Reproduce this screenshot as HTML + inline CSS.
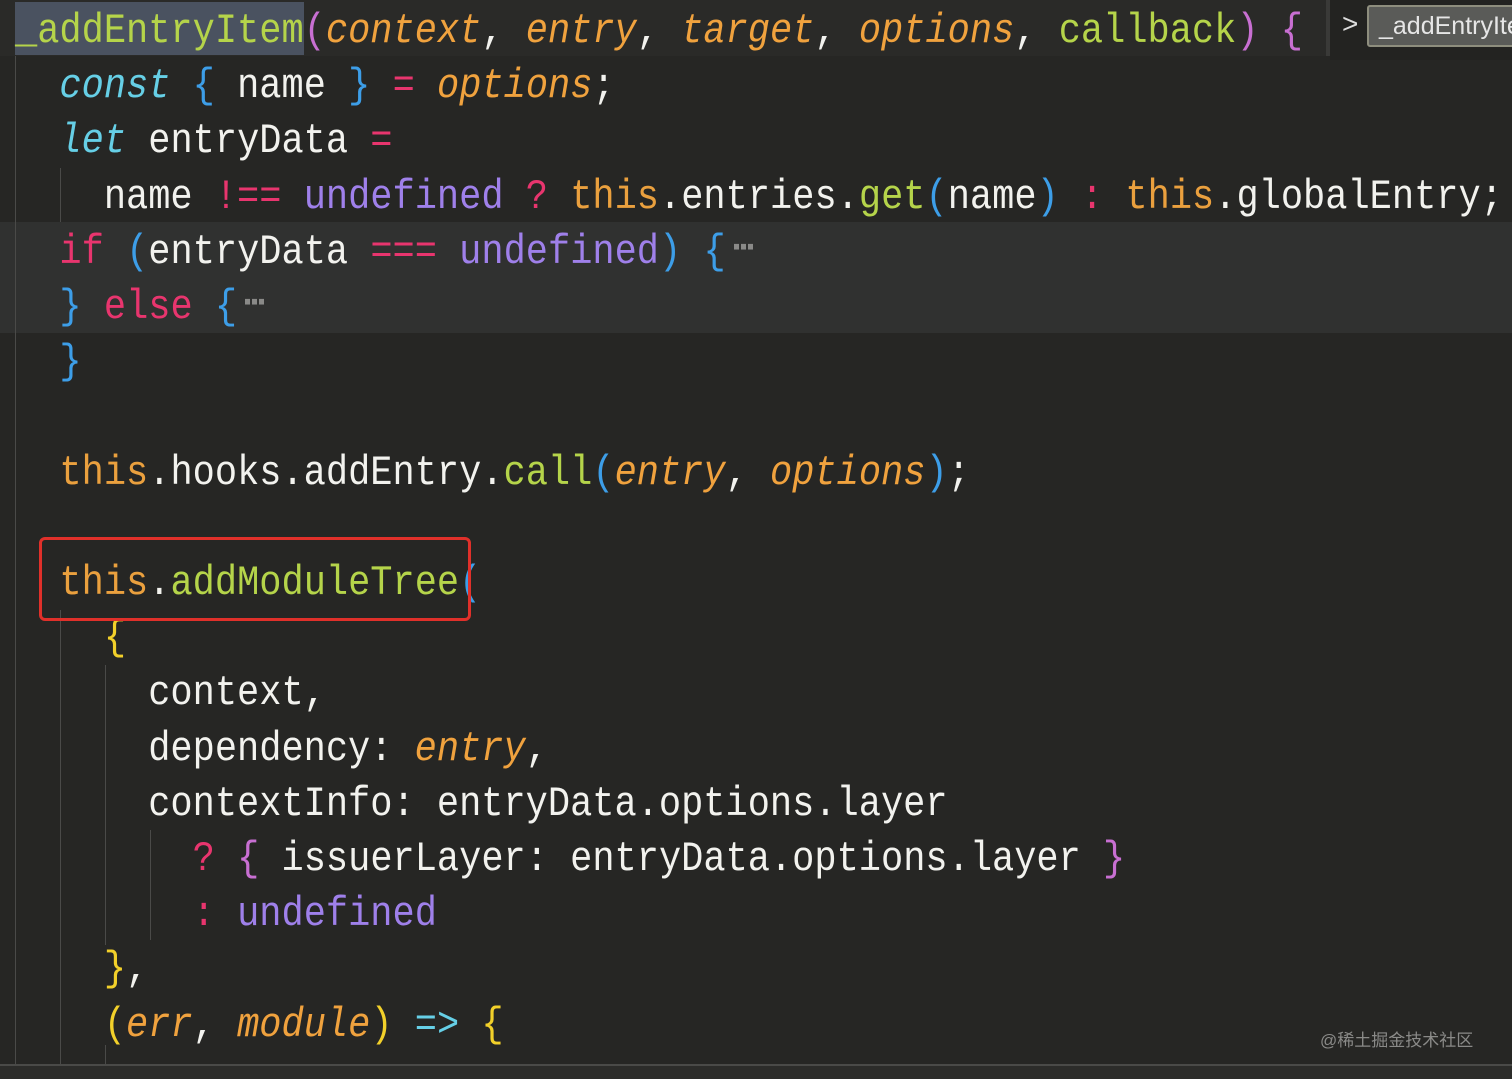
<!DOCTYPE html>
<html><head><meta charset="utf-8"><style>
html,body{margin:0;padding:0;width:1512px;height:1079px;overflow:hidden;background:#262624;}
.ed{position:relative;width:1512px;height:1079px;background:#262624;font-family:"Liberation Mono",monospace;font-size:37px;color:#f2f2ee;}
.l{position:absolute;left:15px;height:55px;line-height:55px;white-space:pre;transform:translateY(5px) scaleY(1.13);transform-origin:0 50%;}
.i{font-style:italic}
.fn{color:#b5d44a}.kw{color:#66cfe6}.pa{color:#f0a23e}.op{color:#e8356e}.pu{color:#9f80ea}.bl{color:#3d9ee8}.th{color:#eaa03e}.ye{color:#f2d02a}.mg{color:#c86fd2}
.d{display:inline-block;width:5px;height:5px;background:#8a8a88;margin-left:2px;vertical-align:12px}
.g{position:absolute;width:1px;background:#4a4a48}
</style></head><body><div class="ed">
<div style="position:absolute;left:0;top:0;width:1512px;height:56px;background:#2a2a28"></div>
<div style="position:absolute;left:15px;top:2px;width:289px;height:53px;background:#4a5260"></div>
<div style="position:absolute;left:0;top:222px;width:1512px;height:111px;background:#303130"></div>
<div class="g" style="left:15px;top:56px;height:1008px"></div>
<div class="g" style="left:60px;top:168px;height:54px"></div>
<div class="g" style="left:60px;top:610px;height:454px"></div>
<div class="g" style="left:105px;top:665px;height:280px"></div>
<div class="g" style="left:105px;top:1045px;height:20px"></div>
<div class="g" style="left:150px;top:830px;height:110px"></div>

<div class="l" style="top:0"><span class="fn">_addEntryItem</span><span class="mg">(</span><span class="pa i">context</span>, <span class="pa i">entry</span>, <span class="pa i">target</span>, <span class="pa i">options</span>, <span class="fn">callback</span><span class="mg">)</span> <span class="mg">{</span></div>
<div class="l" style="top:55.2px">  <span class="kw i">const</span> <span class="bl">{</span> name <span class="bl">}</span> <span class="op">=</span> <span class="pa i">options</span>;</div>
<div class="l" style="top:110.4px">  <span class="kw i">let</span> entryData <span class="op">=</span></div>
<div class="l" style="top:165.6px">    name <span class="op">!==</span> <span class="pu">undefined</span> <span class="op">?</span> <span class="th">this</span>.entries.<span class="fn">get</span><span class="bl">(</span>name<span class="bl">)</span> <span class="op">:</span> <span class="th">this</span>.globalEntry;</div>
<div class="l" style="top:220.8px">  <span class="op">if</span> <span class="bl">(</span>entryData <span class="op">===</span> <span class="pu">undefined</span><span class="bl">)</span> <span class="bl">{</span><span class="d" style="margin-left:8px"></span><span class="d"></span><span class="d"></span></div>
<div class="l" style="top:276px">  <span class="bl">}</span> <span class="op">else</span> <span class="bl">{</span><span class="d" style="margin-left:8px"></span><span class="d"></span><span class="d"></span></div>
<div class="l" style="top:331.2px">  <span class="bl">}</span></div>
<div class="l" style="top:441.6px">  <span class="th">this</span>.hooks.addEntry.<span class="fn">call</span><span class="bl">(</span><span class="pa i">entry</span>, <span class="pa i">options</span><span class="bl">)</span>;</div>
<div class="l" style="top:552px">  <span class="th">this</span>.<span class="fn">addModuleTree</span><span class="bl">(</span></div>
<div class="l" style="top:607.2px">    <span class="ye">{</span></div>
<div class="l" style="top:662.4px">      context,</div>
<div class="l" style="top:717.6px">      dependency: <span class="pa i">entry</span>,</div>
<div class="l" style="top:772.8px">      contextInfo: entryData.options.layer</div>
<div class="l" style="top:828px">        <span class="op">?</span> <span class="mg">{</span> issuerLayer: entryData.options.layer <span class="mg">}</span></div>
<div class="l" style="top:883.2px">        <span class="op">:</span> <span class="pu">undefined</span></div>
<div class="l" style="top:938.4px">    <span class="ye">}</span>,</div>
<div class="l" style="top:993.6px">    <span class="ye">(</span><span class="pa i">err</span>, <span class="pa i">module</span><span class="ye">)</span> <span class="kw">=&gt;</span> <span class="ye">{</span></div>

<div style="position:absolute;left:39px;top:537px;width:426px;height:78px;border:3px solid #e0302a;border-radius:6px"></div>

<div style="position:absolute;left:1326px;top:0;width:4px;height:56px;background:#3a3a38"></div>
<div style="position:absolute;left:1330px;top:0;width:182px;height:60px;background:#232321"></div>
<div style="position:absolute;left:1342px;top:8px;color:#ddd;font-family:'Liberation Sans',sans-serif;font-size:28px">&gt;</div>
<div style="position:absolute;left:1367px;top:5px;width:160px;height:42px;background:#5a5b58;border:2px solid #8e8e7e;border-radius:3px;box-sizing:border-box;overflow:hidden;white-space:nowrap;color:#e6e6e6;font-family:'Liberation Sans',sans-serif;font-size:25px;line-height:38px;padding-left:10px">_addEntryItem</div>

<div style="position:absolute;left:0;top:1064px;width:1512px;height:15px;background:#2c2c2a;border-top:2px solid #4a4a48"></div>
<div style="position:absolute;left:1320px;top:1026px;color:#8a8a88;font-family:'Liberation Sans','Noto Sans CJK SC',sans-serif;font-size:17px">@稀土掘金技术社区</div>
</div></body></html>
